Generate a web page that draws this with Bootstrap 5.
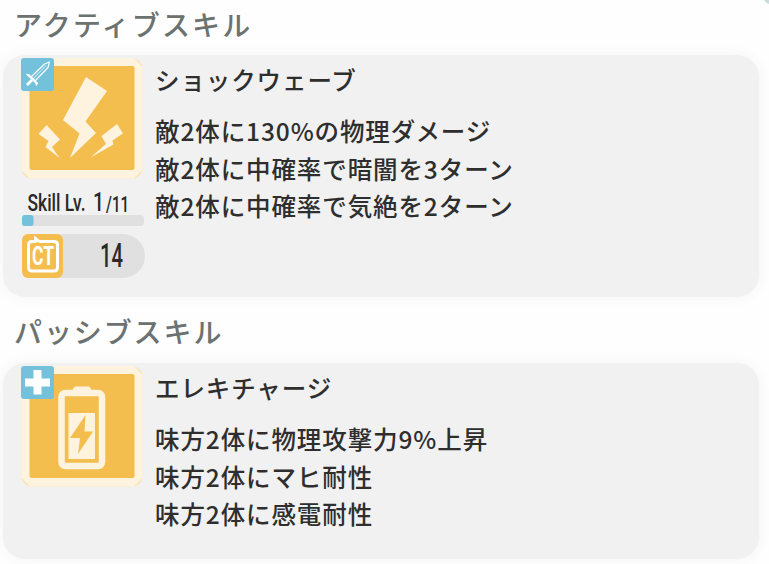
<!DOCTYPE html>
<html lang="ja">
<head>
<meta charset="utf-8">
<meta name="viewport" content="width=device-width, initial-scale=1">
<title>スキル</title>
<link href="https://cdn.jsdelivr.net/npm/bootstrap@5.3.0/dist/css/bootstrap.min.css" rel="stylesheet">
<style>
body{width:769px;height:564px;background:#fefefe;font-family:"Noto Sans CJK JP",sans-serif;color:#2e2e2e}
.heading{font-size:28px;line-height:40px;color:#6b7270;font-weight:500;padding-left:14px;margin:0}
.first{padding-top:4px;height:55px;letter-spacing:2.2px}
.second{padding-top:14px;height:66px;letter-spacing:1.9px}
.skill{margin-left:3px;width:756px;background:#f1f1f1;border-radius:22px;box-shadow:0 0 14px rgba(80,80,100,.055);padding:3px 0 0 18px}
.active-skill{height:242px}
.passive-skill{height:196px}
.side{width:124px;flex:none}
.side svg{display:block}
.desc{padding-left:10px;font-size:24.5px;letter-spacing:.9px;font-weight:500;line-height:37.5px;white-space:nowrap}
.desc p{margin:0}
.title-line{padding-top:3px;height:54px}
.corner{width:8px;height:8px}
</style>
<script src="https://cdn.jsdelivr.net/npm/bootstrap@5.3.0/dist/js/bootstrap.bundle.min.js"></script>
</head>
<body class="overflow-hidden position-relative">
<svg class="corner position-absolute top-0 end-0" viewBox="0 0 8 8"><path d="M3 0H8V4Q5 3 3 0Z" fill="#cbdcde"/></svg>
<h2 class="heading first">アクティブスキル</h2>
<section class="skill active-skill d-flex align-items-start">
  <div class="side">
    <svg width="124" height="122" viewBox="0 0 124 122">
      <rect x=".5" y=".5" width="121" height="120" rx="10" fill="#fae3b5"/>
      <path d="M8 0H113L121.500 9V112L113 120.500H9L.5 112V0Z" fill="#fef3df"/>
      <rect x="8.500" y="8" width="105" height="104" rx="2" fill="#f4be4f"/>
      <path d="M65 19L86 33 64.500 63.500 75 75 49 100 58.500 75.500 42 62Z M25.500 67L39 81.500 31 89 38.500 100 24.500 89 27.500 83 17.500 76Z M96 66L102 75.500 91.500 82.500 92.500 86.500 69.500 99.500 85 86 80.500 78Z" fill="#fef3df"/>
      <rect width="33" height="33" rx="3" fill="#74c1db"/>
      <g fill="none" stroke="#fff" stroke-linejoin="round"><path d="M10 19L23.500 6 28.500 4 27 9.500 14 23Z" stroke-width="1.100"/><path d="M12 21L25 7.500" stroke-width=".8"/><path d="M7 16.500L16.500 26" stroke-width="2.300"/><path d="M11 22L6 27" stroke-width="2.800"/><path d="M5.500 16L8 18M15.500 24.500V27.500" stroke-width="1.600"/></g>
    </svg>
    <svg width="124" height="100" viewBox="0 0 124 100" font-family="Roboto,sans-serif" fill="#292929">
      <text x="6.500" y="30.500" font-size="23" font-weight="500" textLength="58" lengthAdjust="spacingAndGlyphs">Skill Lv.</text>
      <text x="72" y="31" font-size="26" font-weight="500" textLength="11" lengthAdjust="spacingAndGlyphs">1</text>
      <text x="85" y="32" font-size="22" font-weight="500" textLength="23" lengthAdjust="spacingAndGlyphs">/11</text>
      <rect x="1" y="35" width="122" height="11" rx="4" fill="#e0e0e0"/>
      <rect x="1" y="35" width="11.500" height="11" rx="2.500" fill="#74c1db"/>
      <rect x="1" y="54" width="123" height="44" rx="22" fill="#e0e0e0"/>
      <rect x="1" y="54" width="41" height="44" rx="6" fill="#f4be4f"/>
      <path d="M18 61.500H33Q36.500 61.500 36.500 65V87Q36.500 91 33 91H11Q7.500 91 7.500 87V65Q7.500 61.500 11 61.500H14" fill="none" stroke="#fff" stroke-width="3"/>
      <path d="M13 55.500L20.500 61.500 13 63Z" fill="#fff"/>
      <text x="11" y="85" font-size="25" font-weight="700" fill="#fff" textLength="22" lengthAdjust="spacingAndGlyphs">CT</text>
      <text x="79" y="86.500" font-size="34" font-weight="500" textLength="23" lengthAdjust="spacingAndGlyphs">14</text>
    </svg>
  </div>
  <div class="desc">
    <p class="title-line">ショックウェーブ</p>
    <p>敵2体に130%の物理ダメージ</p>
    <p>敵2体に中確率で暗闇を3ターン</p>
    <p>敵2体に中確率で気絶を2ターン</p>
  </div>
</section>
<h2 class="heading second">パッシブスキル</h2>
<section class="skill passive-skill d-flex align-items-start">
  <div class="side">
    <svg width="124" height="122" viewBox="0 0 124 122">
      <rect x=".5" y=".5" width="121" height="120" rx="10" fill="#fae3b5"/>
      <path d="M8 0H113L121.500 9V112L113 120.500H9L.5 112V0Z" fill="#fef3df"/>
      <rect x="8.500" y="8" width="105" height="104" rx="2" fill="#f4be4f"/>
      <path d="M52 25V22.500L54 20.500H68L70 22.500V25" fill="#fef3df"/>
      <rect x="40.500" y="27" width="40.500" height="73" rx="4" fill="none" stroke="#fef3df" stroke-width="6.500"/>
      <path d="M47.500 47H74V93H47.500Z" fill="#fef3df"/>
      <path d="M64.500 49L63.500 65.500H72L57 88 59 72H49Z" fill="#f4be4f"/>
      <rect width="33" height="33" rx="3" fill="#74c1db"/>
      <path d="M12.500 4H20.500V12.500H29V20.500H20.500V28.500H12.500V20.500H4V12.500H12.500Z" fill="#fff"/>
    </svg>
  </div>
  <div class="desc">
    <p class="title-line">エレキチャージ</p>
    <p>味方2体に物理攻撃力9%上昇</p>
    <p>味方2体にマヒ耐性</p>
    <p>味方2体に感電耐性</p>
  </div>
</section>
</body>
</html>
